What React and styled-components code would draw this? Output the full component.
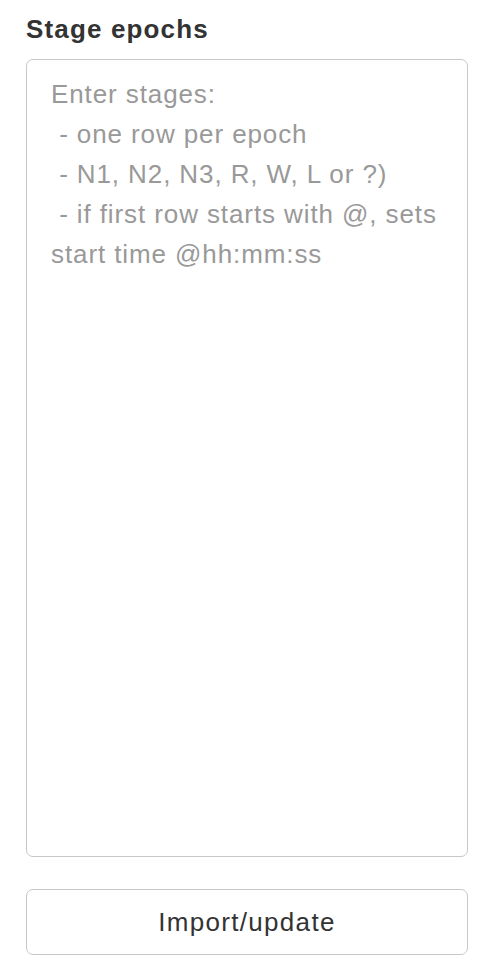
import styled, { createGlobalStyle } from 'styled-components';
import { useState } from 'react';

const GlobalStyle = createGlobalStyle`
  body {
    margin: 0;
    background: #fff;
    font-family: "Liberation Sans", Arial, sans-serif;
    color: #333;
  }
`;

const Panel = styled.div`
  width: 442px;
  padding: 15px 0 0 26px;
  display: flex;
  flex-direction: column;
`;

const Title = styled.label`
  font-size: 26px;
  line-height: 28px;
  font-weight: 700;
  letter-spacing: 1.15px;
  color: #333;
  margin-bottom: 16px;
`;

const StageInput = styled.textarea`
  box-sizing: border-box;
  width: 442px;
  height: 798px;
  padding: 14px 24px;
  border: 1.5px solid #c8c8c8;
  border-radius: 7px;
  font-family: "Liberation Sans", Arial, sans-serif;
  font-size: 26px;
  line-height: 40px;
  letter-spacing: 0.9px;
  color: #555;
  resize: none;
  &::placeholder {
    color: #999;
  }
  &:focus {
    outline: none;
  }
`;

const ImportBtn = styled.button`
  box-sizing: border-box;
  margin-top: 32px;
  width: 442px;
  height: 66px;
  border: 1.5px solid #c8c8c8;
  border-radius: 7px;
  background: #fff;
  font-family: "Liberation Sans", Arial, sans-serif;
  font-size: 26px;
  letter-spacing: 1.3px;
  color: #333;
  cursor: pointer;
`;

const placeholder =
  'Enter stages:\n - one row per epoch\n - N1, N2, N3, R, W, L or ?)\n - if first row starts with @, sets start time @hh:mm:ss';

const App = () => {
  const [stages, setStages] = useState('');

  return (
    <>
      <GlobalStyle />
      <Panel>
        <Title htmlFor='stages'>Stage epochs</Title>
        <StageInput
          id='stages'
          placeholder={placeholder}
          value={stages}
          onChange={(e) => setStages(e.target.value)}
        />
        <ImportBtn type='button'>Import/update</ImportBtn>
      </Panel>
    </>
  );
};

export default App;
